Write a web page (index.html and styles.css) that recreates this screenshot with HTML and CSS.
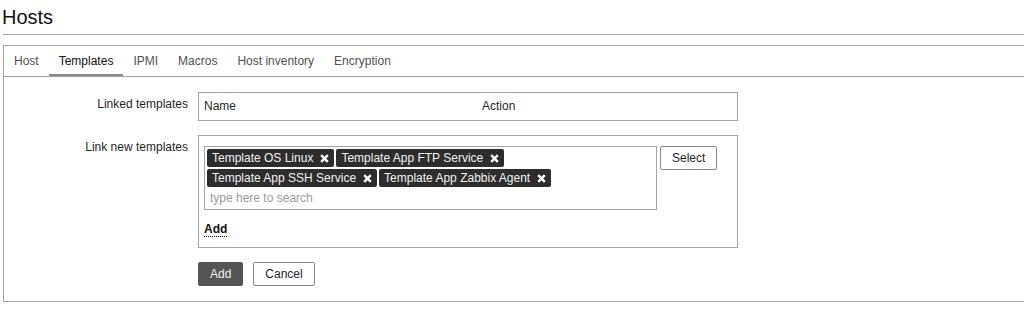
FILE: index.html
```html
<!DOCTYPE html>
<html lang="en">
<head>
<meta charset="utf-8">
<title>Hosts</title>
<link rel="stylesheet" href="styles.css">
</head>
<body>
<div class="page">
  <header class="header">
    <h1 class="title">Hosts</h1>
  </header>
  <div class="panel">
    <ul class="tabs">
      <li class="tab">Host</li>
      <li class="tab tab-active">Templates</li>
      <li class="tab">IPMI</li>
      <li class="tab">Macros</li>
      <li class="tab">Host inventory</li>
      <li class="tab">Encryption</li>
    </ul>
    <form class="form">
      <div class="label">Linked templates</div>
      <div class="field">
        <div class="linked">
          <span class="col-name">Name</span>
          <span class="col-action">Action</span>
        </div>
      </div>

      <div class="label">Link new templates</div>
      <div class="field box">
        <div class="ms-line">
          <div class="ms">
            <span class="tag">Template OS Linux<span class="tag-x"><svg width="9" height="9" viewBox="0 0 9 9"><path d="M1.2 1.2L7.8 7.8M7.8 1.2L1.2 7.8" stroke="#fff" stroke-width="2.4"/></svg></span></span>
            <span class="tag">Template App FTP Service<span class="tag-x"><svg width="9" height="9" viewBox="0 0 9 9"><path d="M1.2 1.2L7.8 7.8M7.8 1.2L1.2 7.8" stroke="#fff" stroke-width="2.4"/></svg></span></span>
            <span class="tag">Template App SSH Service<span class="tag-x"><svg width="9" height="9" viewBox="0 0 9 9"><path d="M1.2 1.2L7.8 7.8M7.8 1.2L1.2 7.8" stroke="#fff" stroke-width="2.4"/></svg></span></span>
            <span class="tag">Template App Zabbix Agent<span class="tag-x"><svg width="9" height="9" viewBox="0 0 9 9"><path d="M1.2 1.2L7.8 7.8M7.8 1.2L1.2 7.8" stroke="#fff" stroke-width="2.4"/></svg></span></span>
            <input class="ms-search" type="text" placeholder="type here to search">
          </div>
          <button type="button" class="btn btn-alt">Select</button>
        </div>
        <div class="add-wrap"><a class="link-action">Add</a></div>
      </div>

      <div class="label"></div>
      <div class="field buttons">
        <button type="button" class="btn btn-main">Add</button>
        <button type="button" class="btn btn-alt">Cancel</button>
      </div>
    </form>
  </div>
</div>
</body>
</html>
```

FILE: styles.css
```css
html, body {
  margin: 0;
  padding: 0;
  overflow: hidden;
  background: #fff;
}

body {
  font-family: "Liberation Sans", Arial, sans-serif;
  font-size: 12px;
  line-height: 14px;
  color: #1f1f1f;
}

.page {
  width: 1040px;
  margin-left: 3px;
}

.header {
  padding: 5px 0 5px;
  border-bottom: 1px solid #a3a3a3;
}

.title {
  margin: 0 0 0 -1px;
  font-size: 20px;
  line-height: 24px;
  font-weight: normal;
  color: #111;
}

.panel {
  margin-top: 10px;
  border: 1px solid #a3a3a3;
}

.tabs {
  list-style: none;
  margin: 0;
  padding: 0;
  display: flex;
  border-bottom: 1px solid #a3a3a3;
}

.tab {
  padding: 8px 10px 6px;
  border-bottom: 2px solid transparent;
  color: #505050;
}

.tab-active {
  color: #111;
  border-bottom-color: #8c8c8c;
}

.form {
  display: grid;
  grid-template-columns: 184px 540px;
  column-gap: 10px;
  row-gap: 14px;
  padding: 15px 0;
}

.label {
  padding-top: 5px;
  text-align: right;
  color: #1f1f1f;
}

.linked {
  display: grid;
  grid-template-columns: 278px 1fr;
  border: 1px solid #a3a3a3;
  padding: 6px 5px 7px;
}

.box {
  border: 1px solid #a3a3a3;
  padding: 10px 5px 10px;
}

.ms-line {
  display: flex;
  align-items: flex-start;
  gap: 3px;
}

.ms {
  width: 447px;
  display: flex;
  flex-wrap: wrap;
  border: 1px solid #a3a3a3;
  padding: 2px 2px 0;
}

.tag {
  display: inline-flex;
  align-items: center;
  height: 18px;
  padding: 0 5px;
  margin: 0 2px 2px 0;
  background: #2d2d2d;
  color: #f2f2f2;
  border-radius: 2px;
  white-space: nowrap;
}

.tag-x {
  display: inline-flex;
  margin-left: 7px;
}

.ms-search {
  flex-basis: 100%;
  box-sizing: border-box;
  height: 20px;
  margin: 0;
  padding: 0 3px 3px;
  border: 0;
  outline: none;
  font-family: inherit;
  font-size: 12px;
  color: #1f1f1f;
  background: transparent;
}

.ms-search::placeholder {
  color: #9a9a9a;
}

.btn {
  height: 24px;
  padding: 0 11px;
  font-family: inherit;
  font-size: 12px;
  line-height: 22px;
  border-radius: 2px;
  cursor: pointer;
}

.btn-alt {
  background: #fff;
  color: #1f1f1f;
  border: 1px solid #8a8a8a;
}

.btn-main {
  background: #555;
  color: #f0f0f0;
  border: 1px solid #555;
}

.add-wrap {
  margin-top: 12px;
}

.link-action {
  display: inline-block;
  font-weight: bold;
  color: #111;
  border-bottom: 1px dotted #111;
  cursor: pointer;
}

.buttons {
  display: flex;
  gap: 10px;
}
```
